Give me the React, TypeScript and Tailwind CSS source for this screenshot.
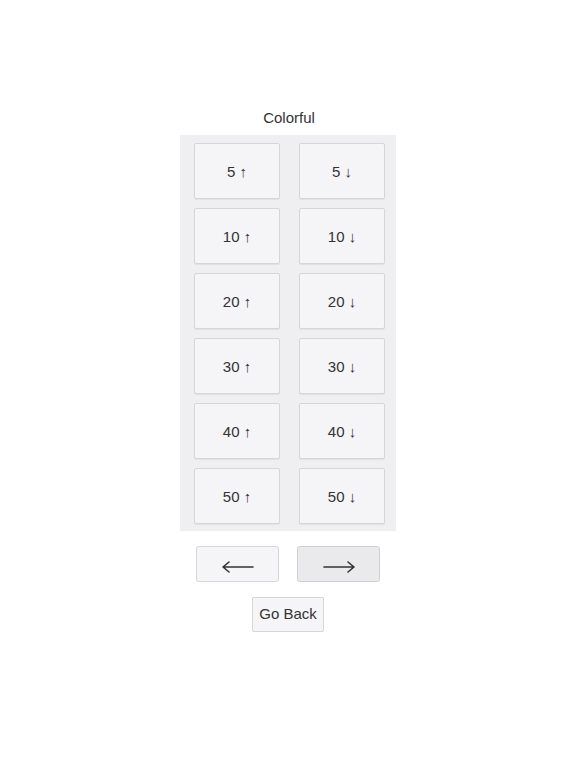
const rows = [5, 10, 20, 30, 40, 50];

function Cell({ label }: { label: string }) {
  return (
    <button className="w-[86px] h-[56px] bg-[#f5f4f6] border border-[#d6d5d8] rounded-[2px] shadow-[0_1px_1px_rgba(0,0,0,0.06)] text-[15px] text-[#333] pt-[2px]">
      {label}
    </button>
  );
}

function Arrow({ dir }: { dir: 'left' | 'right' }) {
  return (
    <svg width="34" height="14" viewBox="0 0 34 14" fill="none" stroke="#333" strokeWidth="1.6" strokeLinecap="round" strokeLinejoin="round">
      {dir === 'left' ? (
        <path d="M2 7 H32 M8 2 L2 7 L8 12" />
      ) : (
        <path d="M2 7 H32 M26 2 L32 7 L26 12" />
      )}
    </svg>
  );
}

export default function App() {
  return (
    <div className="w-[576px] h-[768px] bg-white flex flex-col items-center font-['Liberation_Sans',Arial,sans-serif]">
      <div className="mt-[108px] text-[15px] text-[#333] leading-[20px] ml-[2px]">Colorful</div>
      <div className="mt-[7px] w-[216px] bg-[#efeef0] pt-[8px] pb-[7px] pl-[14px] pr-[11px] grid grid-cols-2 gap-x-[19px] gap-y-[9px]">
        {rows.map((n) => [
          <Cell key={`u${n}`} label={`${n} ↑`} />,
          <Cell key={`d${n}`} label={`${n} ↓`} />,
        ])}
      </div>
      <div className="mt-[15px] flex gap-[18px]">
        <button className="w-[83px] h-[36px] bg-[#f5f4f6] border border-[#d6d5d8] rounded-[3px] flex items-center justify-center pt-[6px]">
          <Arrow dir="left" />
        </button>
        <button className="w-[83px] h-[36px] bg-[#eaeaec] border border-[#d0cfd2] rounded-[3px] flex items-center justify-center pt-[6px]">
          <Arrow dir="right" />
        </button>
      </div>
      <button className="mt-[15px] w-[72px] h-[35px] bg-[#f5f4f6] border border-[#d6d5d8] rounded-[2px] text-[15px] text-[#333]">
        Go Back
      </button>
    </div>
  );
}
